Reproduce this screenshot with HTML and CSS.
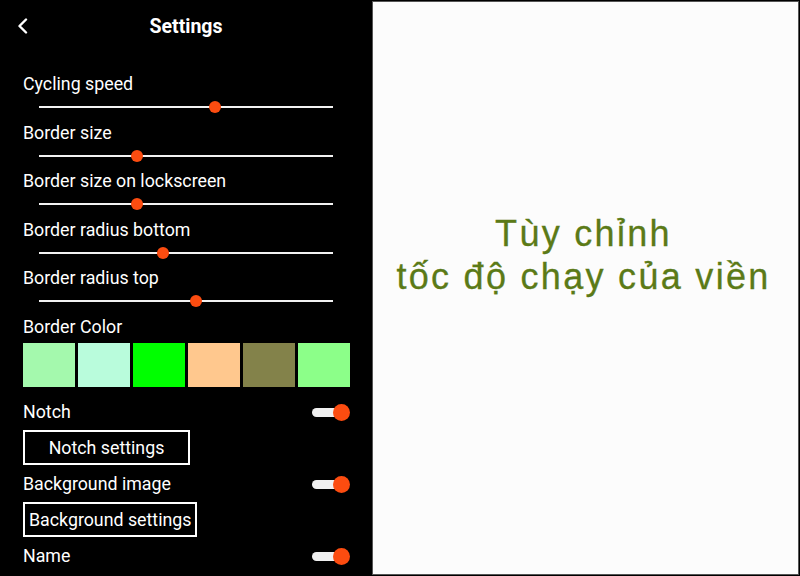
FILE: index.html
```html
<!DOCTYPE html>
<html lang="vi">
<head>
<meta charset="utf-8">
<title>Settings</title>
<link rel="stylesheet" href="styles.css">
</head>
<body>
<div class="page">
  <section class="panel">
    <header class="header">
      <svg class="back" width="12" height="16" viewBox="0 0 12 16"><path d="M9 1.5 L2.5 8 L9 14.5" fill="none" stroke="#fff" stroke-width="2.4" stroke-linecap="round" stroke-linejoin="round"/></svg>
      <h1 class="title">Settings</h1>
    </header>

    <div class="label">Cycling speed</div>
    <div class="slider"><div class="track"><span class="knob" style="left:176px"></span></div></div>

    <div class="label">Border size</div>
    <div class="slider"><div class="track"><span class="knob" style="left:98px"></span></div></div>

    <div class="label">Border size on lockscreen</div>
    <div class="slider"><div class="track"><span class="knob" style="left:98px"></span></div></div>

    <div class="label">Border radius bottom</div>
    <div class="slider"><div class="track"><span class="knob" style="left:124px"></span></div></div>

    <div class="label">Border radius top</div>
    <div class="slider"><div class="track"><span class="knob" style="left:157px"></span></div></div>

    <div class="label">Border Color</div>
    <div class="swatches">
      <span class="swatch c1"></span>
      <span class="swatch c2"></span>
      <span class="swatch c3"></span>
      <span class="swatch c4"></span>
      <span class="swatch c5"></span>
      <span class="swatch c6"></span>
    </div>

    <div class="row row-first"><span class="label-inline">Notch</span><span class="switch"></span></div>
    <div class="btn btn-wide">Notch settings</div>

    <div class="row"><span class="label-inline">Background image</span><span class="switch"></span></div>
    <div class="btn btn-tight">Background settings</div>

    <div class="row"><span class="label-inline">Name</span><span class="switch"></span></div>
  </section>

  <section class="note">
    <p class="note-text">Tùy chỉnh<br>tốc độ chạy của viền</p>
  </section>
</div>
</body>
</html>
```

FILE: styles.css
```css
html, body {
  margin: 0;
  padding: 0;
  background: #000;
}

.page {
  display: flex;
  width: 800px;
  height: 576px;
  overflow: hidden;
  font-family: Roboto, "Noto Sans", "Liberation Sans", sans-serif;
}

.panel {
  width: 372px;
  flex: none;
  box-sizing: border-box;
  padding: 0 22px 0 23px;
  color: #fff;
  display: flex;
  flex-direction: column;
}

.header {
  height: 72px;
  position: relative;
  display: flex;
  justify-content: center;
  margin: 0 -22px 0 -23px;
}

.back {
  position: absolute;
  left: 17px;
  top: 18px;
}

.title {
  margin: 0;
  padding-top: 15px;
  font-size: 19.5px;
  font-weight: 700;
  line-height: 24px;
  height: 24px;
}

.label {
  font-size: 17.8px;
  line-height: 24px;
  height: 24px;
}

.slider {
  height: 24.5px;
  padding-left: 16px;
  box-sizing: border-box;
  padding-top: 10px;
}

.track {
  position: relative;
  width: 294px;
  height: 2px;
  background: #f2f2f2;
}

.knob {
  position: absolute;
  top: -5px;
  width: 12px;
  height: 12px;
  margin-left: -6px;
  border-radius: 50%;
  background: #fc4c10;
}

.swatches {
  display: flex;
  gap: 3px;
  margin-top: 4.5px;
}

.swatch {
  width: 52px;
  height: 44px;
}
.c1 { background: #a4f9ad; }
.c2 { background: #b9fcdc; }
.c3 { background: #00ff00; }
.c4 { background: #ffc88e; }
.c5 { background: #83824a; }
.c6 { background: #8cff89; }

.row {
  display: flex;
  justify-content: space-between;
  align-items: center;
  height: 24px;
  margin-top: 7px;
}

.row-first {
  margin-top: 13px;
}

.label-inline {
  font-size: 17.8px;
  line-height: 24px;
}

.switch {
  position: relative;
  width: 38px;
  height: 17px;
}

.switch::before {
  content: "";
  position: absolute;
  left: 0;
  top: 4px;
  width: 30px;
  height: 9px;
  border-radius: 5px;
  background: #f0f0f0;
}

.switch::after {
  content: "";
  position: absolute;
  right: 0;
  top: 0;
  width: 17px;
  height: 17px;
  border-radius: 50%;
  background: #fc4c10;
}

.btn {
  align-self: flex-start;
  margin-top: 6px;
  height: 35px;
  box-sizing: border-box;
  border: 2px solid #fff;
  font-size: 17.8px;
  line-height: 31px;
  text-align: center;
}

.btn-wide {
  width: 167px;
}

.btn-tight {
  padding: 0 4px;
}

.note {
  flex: 1;
  margin: 1px 1px 1px 0;
  border: 1px solid #555;
  background: #fcfcfc;
  display: flex;
  justify-content: center;
  align-items: flex-start;
}

.note-text {
  margin: 0;
  padding-top: 210px;
  padding-right: 4px;
  font-family: "Liberation Sans", Arial, sans-serif;
  font-size: 36px;
  letter-spacing: 2.3px;
  line-height: 43px;
  color: #5b7a17;
  -webkit-text-stroke: 0.3px #5b7a17;
  text-align: center;
}
```
